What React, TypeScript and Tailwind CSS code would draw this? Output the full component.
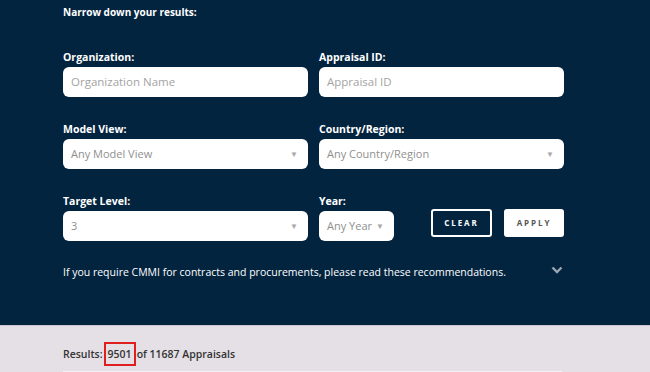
import React from 'react';

const font = { fontFamily: '"Open Sans", "Liberation Sans", sans-serif' };

function Label({ children }: { children: React.ReactNode }) {
  return <div className="text-[10.5px] leading-[14px] font-bold text-white mb-[3px]">{children}</div>;
}

function TextInput({ placeholder }: { placeholder: string }) {
  return (
    <div className="h-[30px] bg-white rounded-[6px] flex items-center px-2 text-[11.5px] text-[#a3a3a3]">
      {placeholder}
    </div>
  );
}

function Select({ value, className = '' }: { value: string; className?: string }) {
  return (
    <div className={`h-[30px] bg-white rounded-[6px] flex items-center justify-between pl-2 pr-[10px] text-[11px] text-[#8f8f8f] ${className}`}>
      <span>{value}</span>
      <span className="text-[8px] text-[#a8a8a8]">▼</span>
    </div>
  );
}

export default function App() {
  return (
    <div className="w-[650px] h-[372px] overflow-hidden bg-[#e5e0e6]" style={font}>
      {/* Filter panel */}
      <div className="h-[326px] bg-[#03243f] pl-[63px] pt-[5px] border-b border-[#c9c6cc]">
        <div className="text-[10px] leading-[14px] font-bold text-white">Narrow down your results:</div>

        <div className="mt-[31px] grid grid-cols-[245px_245px] gap-x-[11px] gap-y-[25px]">
          <div>
            <Label>Organization:</Label>
            <TextInput placeholder="Organization Name" />
          </div>
          <div>
            <Label>Appraisal ID:</Label>
            <TextInput placeholder="Appraisal ID" />
          </div>
          <div>
            <Label>Model View:</Label>
            <Select value="Any Model View" />
          </div>
          <div>
            <Label>Country/Region:</Label>
            <Select value="Any Country/Region" />
          </div>
          <div>
            <Label>Target Level:</Label>
            <Select value="3" />
          </div>
          <div className="flex items-end">
            <div>
              <Label>Year:</Label>
              <Select value="Any Year" className="w-[75px]" />
            </div>
            <div className="flex gap-3 ml-[37px] mb-[4px]">
              <button className="w-[61px] h-[28px] border-2 border-white rounded-[3px] text-white text-[8px] font-bold tracking-[0.24em]">
                CLEAR
              </button>
              <button className="w-[60px] h-[28px] bg-white rounded-[3px] text-[#555] text-[8px] font-bold tracking-[0.24em]">
                APPLY
              </button>
            </div>
          </div>
        </div>

        <div className="mt-[24px] flex items-center w-[502px] justify-between">
          <span className="text-[10.5px] leading-[14px] text-white">
            If you require CMMI for contracts and procurements, please read these recommendations.
          </span>
          <svg width="12" height="8" viewBox="0 0 12 8" className="mr-[2px] mt-[-4px]">
            <path d="M1.5 1.5 L6 6 L10.5 1.5" fill="none" stroke="#9aa6b2" strokeWidth="2.4" />
          </svg>
        </div>
      </div>

      {/* Results */}
      <div className="pl-[63px] pt-[16px]">
        <div className="text-[10.5px] leading-[14px] font-semibold text-[#333] flex items-center">
          <span>Results:</span>
          <span className="ml-[1px] border-2 border-[#e0201f] px-[2px] py-[3px]">9501</span>
          <span className="ml-[1px]">of 11687 Appraisals</span>
        </div>
        <div className="mt-[5px] w-[499px] h-[10px] bg-[#f3f1f4]" />
      </div>
    </div>
  );
}
